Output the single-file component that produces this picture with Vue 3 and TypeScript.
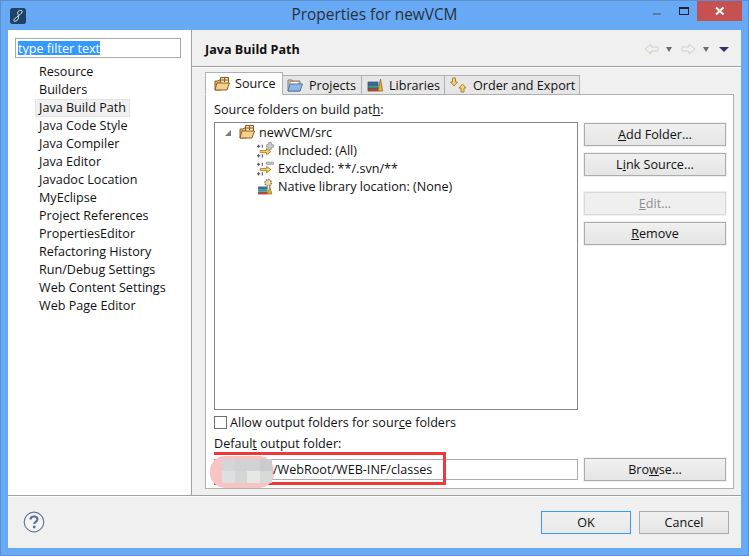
<script setup lang="ts">
const pages: string[] = [
  'Resource', 'Builders', 'Java Build Path', 'Java Code Style', 'Java Compiler', 'Java Editor',
  'Javadoc Location', 'MyEclipse', 'Project References', 'PropertiesEditor', 'Refactoring History',
  'Run/Debug Settings', 'Web Content Settings', 'Web Page Editor',
]
const mosaic: string[] = ['#d3d5d6', '#cfd1d2', '#d0d2d3', '#c9cbcc', '#dde0e0', '#d4d6d6', '#e6e8e6', '#d8dada']
</script>

<template>
  <div class="window">
    <header class="titlebar">
      <svg class="app-icon" width="16" height="16" viewBox="0 0 16 16">
        <rect width="16" height="16" rx="2.5" fill="#1d4468" />
        <path d="M11.500 2.500C8.500 2 7 4 8 6.500s1 5-2 6.500C3.500 14 3 12 5 10.500c2-1.500 5-3.500 6.500-5.500 1-1.500 1-2.300 0-2.500z" fill="none" stroke="#dfe8ef" stroke-width="1" />
      </svg>
      <div class="title">Properties for newVCM</div>
      <div class="controls">
        <i class="min"></i>
        <i class="max"></i>
        <div class="close">
          <svg width="10" height="10" viewBox="0 0 10 10"><path d="M1 1.500l7.500 7M8.500 1.500L1 8.500" stroke="#fff" stroke-width="2" /></svg>
        </div>
      </div>
    </header>

    <div class="client">
      <div class="main">
        <aside class="sidebar">
          <div class="filter"><span class="filter-sel">type filter text</span></div>
          <ul class="pagelist">
            <li v-for="p in pages" :key="p" :class="{ current: p === 'Java Build Path' }"><span>{{ p }}</span></li>
          </ul>
        </aside>

        <section class="content">
          <div class="heading">
            <h1>Java Build Path</h1>
            <div class="nav">
              <svg width="15" height="12" viewBox="0 0 15 12"><path d="M1 6l6-5v3h7v4H7v3z" fill="#f2f2ec" stroke="#cfd0c8" /></svg>
              <i class="tri"></i>
              <svg class="fwd" width="15" height="12" viewBox="0 0 15 12"><path d="M14 6L8 1v3H1v4h7v3z" fill="#f2f2ec" stroke="#cfd0c8" /></svg>
              <i class="tri"></i>
              <i class="tri big"></i>
            </div>
          </div>

          <div class="tabs-area">
            <div class="tabs">
              <div class="tab active">
                <svg width="16" height="16" viewBox="0 0 16 16">
                  <path d="M1 14V5h3l1-1h2v10z" fill="#e2b56e" stroke="#8f5f22" />
                  <path d="M6.500 6V1.500h8V7M10.500 1.500V6M6.500 4h8" fill="#f6e2b4" stroke="#8a5a20" />
                  <path d="M1 14l2-7h12.500l-2.500 7z" fill="#f4d08f" stroke="#8f5f22" />
                </svg>
                Source
              </div>
              <div class="tab">
                <svg width="16" height="16" viewBox="0 0 16 16">
                  <path d="M1 14V3h4l1 1h7v10z" fill="#d8c99c" stroke="#6f7f96" />
                  <path d="M3 7V4.500h9V8" fill="#fff" stroke="#b89a60" />
                  <path d="M1 14l2-7h12.500L13 14z" fill="#8eb6e6" stroke="#4f76ab" />
                </svg>
                Projects
              </div>
              <div class="tab">
                <svg width="16" height="16" viewBox="0 0 16 16">
                  <rect x="1" y="11" width="10" height="3" fill="#b5483c" stroke="#6e3a30" stroke-width=".7" />
                  <rect x="1" y="8" width="10" height="3" fill="#3f9c8a" stroke="#2c6b5f" stroke-width=".7" />
                  <rect x="1" y="5" width="10" height="3" fill="#3e6aa6" stroke="#2e4a75" stroke-width=".7" />
                  <path d="M11 14l2.500-12 2 12z" fill="#e6b33c" stroke="#8f6a1c" stroke-width=".8" />
                </svg>
                Libraries
              </div>
              <div class="tab">
                <svg width="17" height="16" viewBox="0 0 17 16">
                  <path d="M2.500 1h3v4h2L4 9 .5 5h2z" fill="#f2d67a" stroke="#a17a2a" stroke-width=".9" />
                  <path d="M11 15h3v-4h2l-3.500-4L9 11h2z" fill="#f2d67a" stroke="#a17a2a" stroke-width=".9" />
                </svg>
                Order and Export
              </div>
            </div>

            <div class="panel">
              <div class="label"><span>Source folders on build pat<u>h</u>:</span></div>
              <div class="build-row">
                <div class="tree">
                  <div class="row root">
                    <i class="expander"></i>
                    <svg width="16" height="16" viewBox="0 0 16 16">
                      <path d="M1 14V5h3l1-1h2v10z" fill="#e2b56e" stroke="#8f5f22" />
                      <path d="M6.500 6V1.500h8V7M10.500 1.500V6M6.500 4h8" fill="#f6e2b4" stroke="#8a5a20" />
                      <path d="M1 14l2-7h12.500l-2.500 7z" fill="#f4d08f" stroke="#8f5f22" />
                    </svg>
                    newVCM/src
                  </div>
                  <div class="row child">
                    <svg width="17" height="17" viewBox="0 0 16 16">
                      <path d="M0 4h3M1.500 2.500v3M5 2.500v3M0 13h3M1.500 11.500v3M5 11.500v3" stroke="#4d4d4d" fill="none" />
                      <path d="M3 8h6V6l4 3-4 3v-2H3z" fill="#f0cf70" stroke="#a37d26" stroke-width=".8" />
                      <path d="M11 .5h2.500v2H15.500V5h-2v2H11V5H9V2.500h2z" fill="#c9ccd0" stroke="#8d9095" stroke-width=".7" />
                    </svg>
                    Included: (All)
                  </div>
                  <div class="row child">
                    <svg width="17" height="17" viewBox="0 0 16 16">
                      <path d="M0 4h3M1.500 2.500v3M5 2.500v3M0 13h3M1.500 11.500v3M5 11.500v3" stroke="#4d4d4d" fill="none" />
                      <path d="M3 8h6V6l4 3-4 3v-2H3z" fill="#f0cf70" stroke="#a37d26" stroke-width=".8" />
                      <rect x="9" y="2" width="6.500" height="2" fill="#c9ccd0" stroke="#8d9095" stroke-width=".7" />
                    </svg>
                    Excluded: **/.svn/**
                  </div>
                  <div class="row child">
                    <svg width="17" height="17" viewBox="0 0 16 16">
                      <rect x="1" y="13" width="9" height="2.500" fill="#b5483c" />
                      <rect x="1" y="10.500" width="9" height="2.500" fill="#3f9c8a" />
                      <rect x="1" y="8" width="9" height="2.500" fill="#3e6aa6" />
                      <path d="M10 15l2-7 2 7z" fill="#e6b33c" stroke="#8f6a1c" stroke-width=".7" />
                      <circle cx="10.500" cy="4.500" r="3" fill="#e9d9a8" stroke="#8f7a45" stroke-width="1.400" stroke-dasharray="1.500 .8" />
                    </svg>
                    Native library location: (None)
                  </div>
                </div>
                <div class="side-buttons">
                  <button class="btn"><u>A</u>dd Folder...</button>
                  <button class="btn"><span>L<u>i</u>nk Source...</span></button>
                  <button class="btn disabled edit"><u>E</u>dit...</button>
                  <button class="btn"><u>R</u>emove</button>
                </div>
              </div>

              <label class="check">
                <i class="box"></i>
                <span>Allow output folders for sour<u>c</u>e folders</span>
              </label>
              <div class="label output-label"><span>Defaul<u>t</u> output folder:</span></div>
              <div class="output-row">
                <div class="output">
                  <div class="redbox"></div>
                  <div class="blur">
                    <div class="mosaic">
                      <i v-for="(c, n) in mosaic" :key="n" :style="{ background: c }"></i>
                    </div>
                  </div>
                  <span class="path">/WebRoot/WEB-INF/classes</span>
                </div>
                <button class="btn browse">Bro<u>w</u>se...</button>
              </div>
            </div>
          </div>
        </section>
      </div>

      <footer class="footer">
        <svg class="help" width="22" height="22" viewBox="0 0 22 22">
          <circle cx="11" cy="11" r="9.800" fill="#f3f4f6" stroke="#66789a" stroke-width="1.200" />
          <path d="M7.500 8.500C7.500 6.500 9 5.500 11 5.500s3.500 1 3.500 2.800c0 2.500-3.300 2.500-3.300 4.700" fill="none" stroke="#5d6f95" stroke-width="2.200" />
          <circle cx="11.200" cy="16" r="1.400" fill="#5d6f95" />
        </svg>
        <div class="actions">
          <button class="btn dlg default">OK</button>
          <button class="btn dlg">Cancel</button>
        </div>
      </footer>
    </div>
  </div>
</template>

<style>
html, body { margin: 0; background: #67a9f5; }
</style>

<style scoped>
* { box-sizing: border-box; }
.window {
  width: 749px; height: 556px; background: #67a9f5; border: 1px solid #5a90d0;
  display: flex; flex-direction: column; padding: 0 7px 7px;
  font-family: "Open Sans", "Noto Sans", sans-serif; font-size: 12.6px; color: #111; overflow: hidden;
}
.titlebar { height: 29px; flex: none; display: flex; align-items: flex-start; position: relative; }
.app-icon { margin: 7px 0 0 2px; }
.title { position: absolute; left: 0; right: 0; top: 4px; text-align: center; font-size: 15.4px; color: #2a3038; line-height: 20px; }
.controls { margin-left: auto; display: flex; align-items: flex-start; margin-right: -1px; }
.min { width: 8px; height: 2px; background: #5b7ea8; margin: 12px 0 0 0; }
.max { width: 10px; height: 8px; border: 1px solid #1a2430; border-top-width: 2px; margin: 6px 8px 0 18px; }
.close { width: 45px; height: 20px; background: #c75050; display: flex; align-items: center; justify-content: center; }
.client { flex: 1; display: flex; flex-direction: column; background: #f0f0f0; min-height: 0; }
.main { flex: 1; display: flex; min-height: 0; border-bottom: 1px solid #a0a0a0; height: 466px; }
.sidebar { width: 184px; flex: none; background: #fff; border-right: 1px solid #a0a0a0; padding: 8px 0 0 7px; }
.filter { width: 166px; height: 20px; border: 1px solid #a9a9a9; padding: 0 2px; display: flex; align-items: center; }
.filter-sel { background: #3399ff; color: #fff; line-height: 15px; height: 14px; display: flex; align-items: center; }
.pagelist { list-style: none; margin: 5px 0 0; padding: 0 0 0 20px; }
.pagelist li { height: 18px; line-height: 18px; }
.pagelist li span { display: inline-block; padding: 0 3px; height: 18px; white-space: nowrap; border: 1px solid transparent; line-height: 16px; }
.pagelist li.current span { background: #f0f0f0; border-color: #e3e3e3; }
.content { flex: 1; display: flex; flex-direction: column; min-width: 0; }
.heading { height: 37px; flex: none; display: flex; align-items: center; padding: 2px 12px 0 13px; border-bottom: 1px solid #a0a0a0; box-shadow: 0 1px 0 #fff; }
.heading h1 { margin: 0; font-size: 12.6px; font-weight: 700; color: #111; }
.nav { margin-left: auto; display: flex; align-items: center; }
.tri { width: 0; height: 0; border: 3.5px solid transparent; border-top: 5px solid #6b6b6b; border-bottom: 0; margin-left: 7px; }
.fwd { margin-left: 9px; }
.tri.big { border-width: 5px 5px 0; border-top-color: #34306a; margin-left: 10px; }
.tabs-area { flex: 1; padding: 6px 7px 6px 13px; display: flex; flex-direction: column; min-height: 0; }
.tabs { display: flex; height: 22px; flex: none; align-items: flex-end; position: relative; z-index: 1; margin-bottom: -1px; }
.tab { display: flex; align-items: center; gap: 6px; height: 20px; padding: 0 3px 0 5px; border: 1px solid #b0b0b0; border-left-width: 0; background: #e6e6e6; white-space: nowrap; }
.tab:nth-child(2) { width: 79px; padding-left: 4px; }
.tab:nth-child(3) { width: 83px; }
.tab:nth-child(4) { width: 135px; }
.tab.active { width: 78px; height: 23px; background: #fff; border-left-width: 1px; border-bottom-color: #fff; padding-left: 8px; gap: 5px; }
.panel { flex: 1; background: #fff; border: 1px solid #b0b0b0; padding: 6px 6px 0 8px; display: flex; flex-direction: column; min-height: 0; }
.label { height: 18px; line-height: 18px; flex: none; }
.build-row { display: flex; height: 288px; flex: none; margin-top: 3px; gap: 6px; }
.tree { width: 364px; flex: none; border: 1px solid #82878f; }
.row { height: 18px; display: flex; align-items: center; gap: 5px; white-space: nowrap; }
.root { padding-left: 10px; gap: 4px; }
.expander { width: 0; height: 0; border-left: 6px solid transparent; border-bottom: 6px solid #7b7b7b; margin-right: 4px; margin-top: 1px; }
.child { padding-left: 42px; gap: 4px; }
.side-buttons { flex: 1; display: flex; flex-direction: column; padding-top: 1px; }
.btn {
  font: inherit; color: #111; width: 142px; height: 23px; padding: 0; flex: none; text-align: center;
  border: 1px solid #acacac; background: linear-gradient(#f0f0f0, #e5e5e5); outline: 1px solid #f0f0f0;
}
.side-buttons .btn + .btn { margin-top: 7px; }
.side-buttons .edit { margin-top: 16px !important; }
.btn.disabled { color: #8f8f8f; background: #efefef; border-color: #dadada; }
.check { display: flex; align-items: center; gap: 3px; margin-top: 5px; height: 15px; }
.box { width: 13px; height: 13px; border: 1px solid #707070; background: #fff; }
.output-label { margin-top: 5px; }
.output-row { display: flex; gap: 6px; margin-top: 5px; align-items: center; }
.output { width: 364px; height: 21px; border: 1px solid #abadb3; position: relative; padding-left: 58px; line-height: 19px; flex: none; }
.blur { position: absolute; left: -5px; top: -4px; width: 64px; height: 32px; background: #f7c3c3; border-radius: 15px; padding: 3px 5px 0 12px; }
.mosaic { display: grid; grid-template-columns: repeat(4, 1fr); grid-auto-rows: 12px; height: 24px; width: 50px; }
.mosaic i { display: block; }
.path { position: relative; }
.redbox { position: absolute; left: -1px; top: -8px; width: 232px; height: 33px; border: 3px solid #f03838; border-left: 0; }
.browse { height: 23px; }
.footer { height: 52px; flex: none; display: flex; align-items: center; padding: 0 12px 0 15px; border-top: 1px solid #fff; }
.help { margin-top: -1px; }
.actions { margin-left: auto; display: flex; gap: 8px; }
.dlg { width: 90px; height: 23px; outline: 0; }
.default { border-color: #3399ff; background: linear-gradient(#f0f0f0, #e8e8e8); }
</style>
